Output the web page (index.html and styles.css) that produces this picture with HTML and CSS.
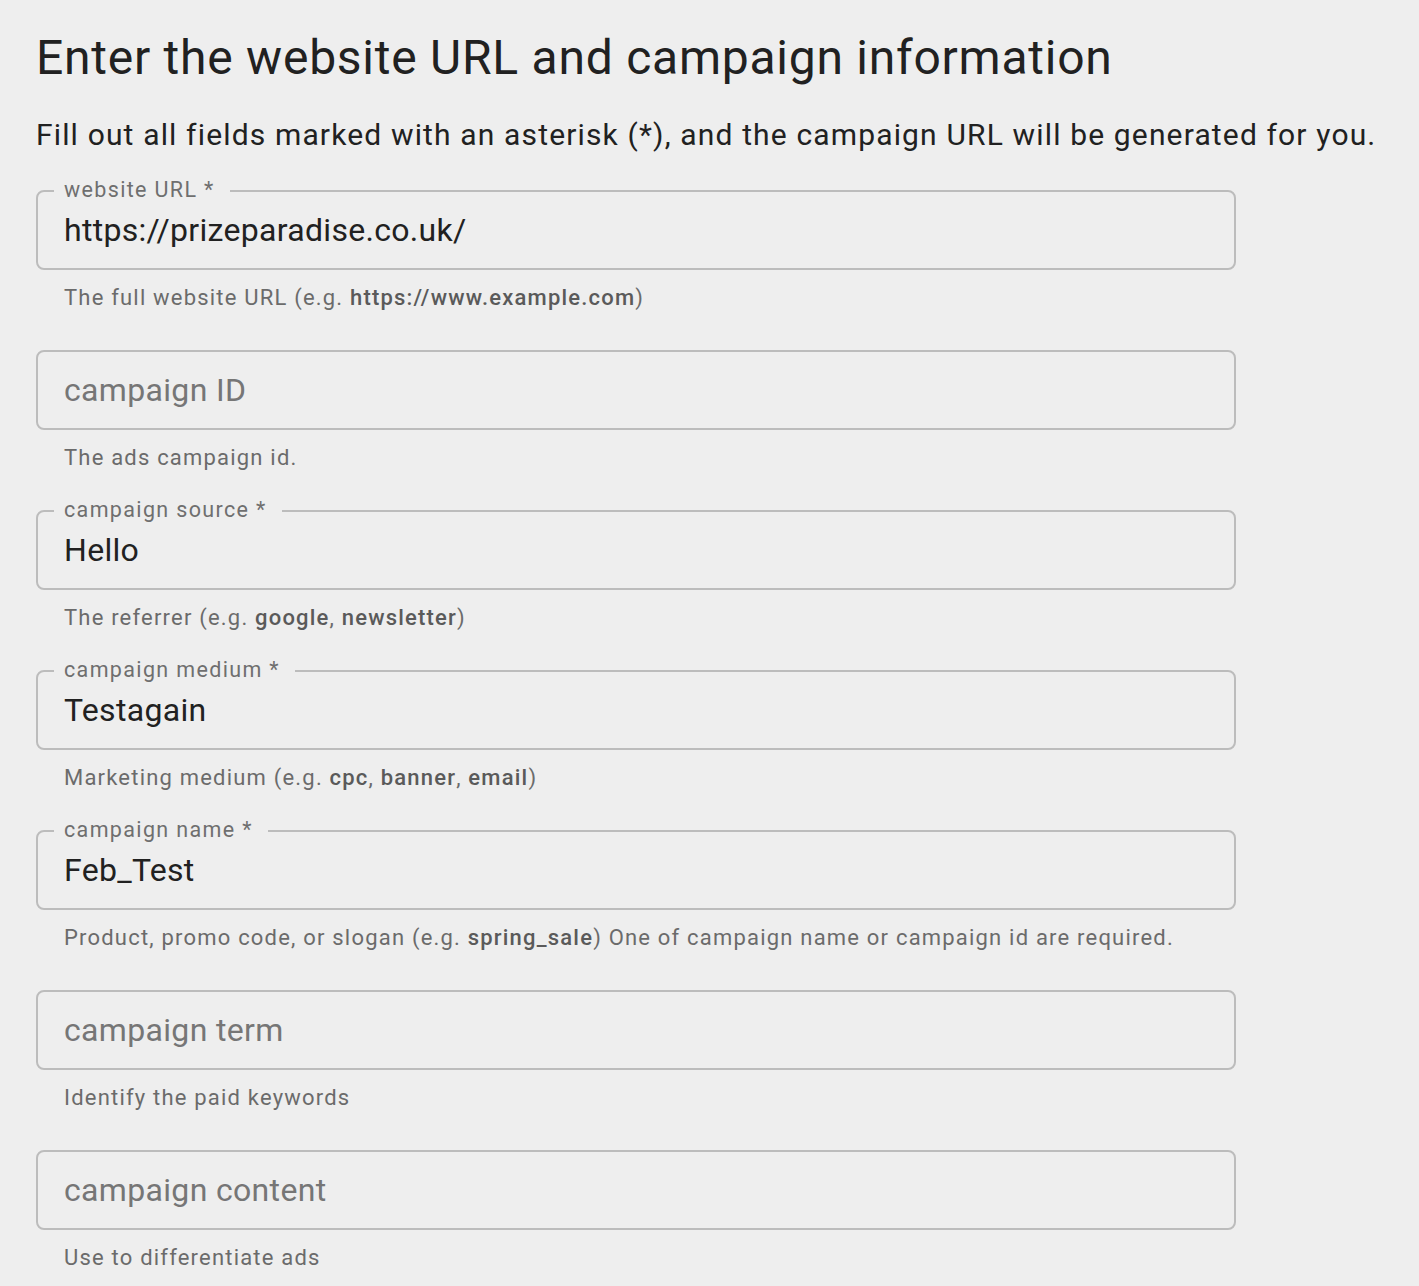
FILE: index.html
```html
<!DOCTYPE html>
<html lang="en">
<head>
<meta charset="utf-8">
<title>Campaign URL Builder</title>
<link rel="stylesheet" href="styles.css">
</head>
<body>
<main class="page">
  <h1 class="title">Enter the website URL and campaign information</h1>
  <p class="subtitle">Fill out all fields marked with an asterisk (*), and the campaign URL will be generated for you.</p>

  <div class="field">
    <div class="box">
      <span class="label">website URL *</span>
      <span class="value">https://prizeparadise.co.uk/</span>
    </div>
    <div class="helper">The full website URL (e.g. <b>https://www.example.com</b>)</div>
  </div>

  <div class="field">
    <div class="box">
      <span class="placeholder">campaign ID</span>
    </div>
    <div class="helper">The ads campaign id.</div>
  </div>

  <div class="field">
    <div class="box">
      <span class="label">campaign source *</span>
      <span class="value">Hello</span>
    </div>
    <div class="helper">The referrer (e.g. <b>google</b>, <b>newsletter</b>)</div>
  </div>

  <div class="field">
    <div class="box">
      <span class="label">campaign medium *</span>
      <span class="value">Testagain</span>
    </div>
    <div class="helper">Marketing medium (e.g. <b>cpc</b>, <b>banner</b>, <b>email</b>)</div>
  </div>

  <div class="field">
    <div class="box">
      <span class="label">campaign name *</span>
      <span class="value">Feb_Test</span>
    </div>
    <div class="helper">Product, promo code, or slogan (e.g. <b>spring_sale</b>) One of campaign name or campaign id are required.</div>
  </div>

  <div class="field">
    <div class="box">
      <span class="placeholder">campaign term</span>
    </div>
    <div class="helper">Identify the paid keywords</div>
  </div>

  <div class="field">
    <div class="box">
      <span class="placeholder">campaign content</span>
    </div>
    <div class="helper">Use to differentiate ads</div>
  </div>
</main>
</body>
</html>
```

FILE: styles.css
```css
html, body {
  margin: 0;
  padding: 0;
  background: #eeeeee;
}

body {
  font-family: Roboto, "Liberation Sans", Arial, sans-serif;
  color: #212121;
}

.page {
  padding: 30px 0 0 36px;
}

.title {
  margin: 0;
  font-size: 48px;
  line-height: 56px;
  font-weight: 400;
  letter-spacing: 0.75px;
  color: #212121;
}

.subtitle {
  margin: 31px 0 0 0;
  font-size: 30px;
  line-height: 36px;
  font-weight: 400;
  letter-spacing: 1.15px;
  color: #212121;
  white-space: nowrap;
}

.field {
  width: 1200px;
}

.subtitle + .field {
  margin-top: 37px;
}

.field + .field {
  margin-top: 38px;
}

.box {
  position: relative;
  box-sizing: border-box;
  height: 80px;
  border: 2px solid #bcbcbc;
  border-radius: 8px;
  display: flex;
  align-items: center;
  padding: 0 26px;
}

.label {
  position: absolute;
  left: 16px;
  top: -15px;
  padding: 0 15px 0 10px;
  background: #eeeeee;
  font-size: 21.5px;
  line-height: 26px;
  color: #6f6f6f;
  letter-spacing: 1.35px;
  white-space: nowrap;
}

.value {
  font-size: 32px;
  line-height: 40px;
  color: #212121;
  letter-spacing: 0.3px;
}

.placeholder {
  font-size: 32px;
  line-height: 40px;
  color: #767676;
  letter-spacing: 0.33px;
}

.helper {
  margin-top: 14px;
  padding-left: 28px;
  font-size: 22px;
  line-height: 28px;
  color: #6b6b6b;
  letter-spacing: 1.2px;
  white-space: nowrap;
}

.helper b {
  font-weight: 500;
  color: #5a5a5a;
}
```
